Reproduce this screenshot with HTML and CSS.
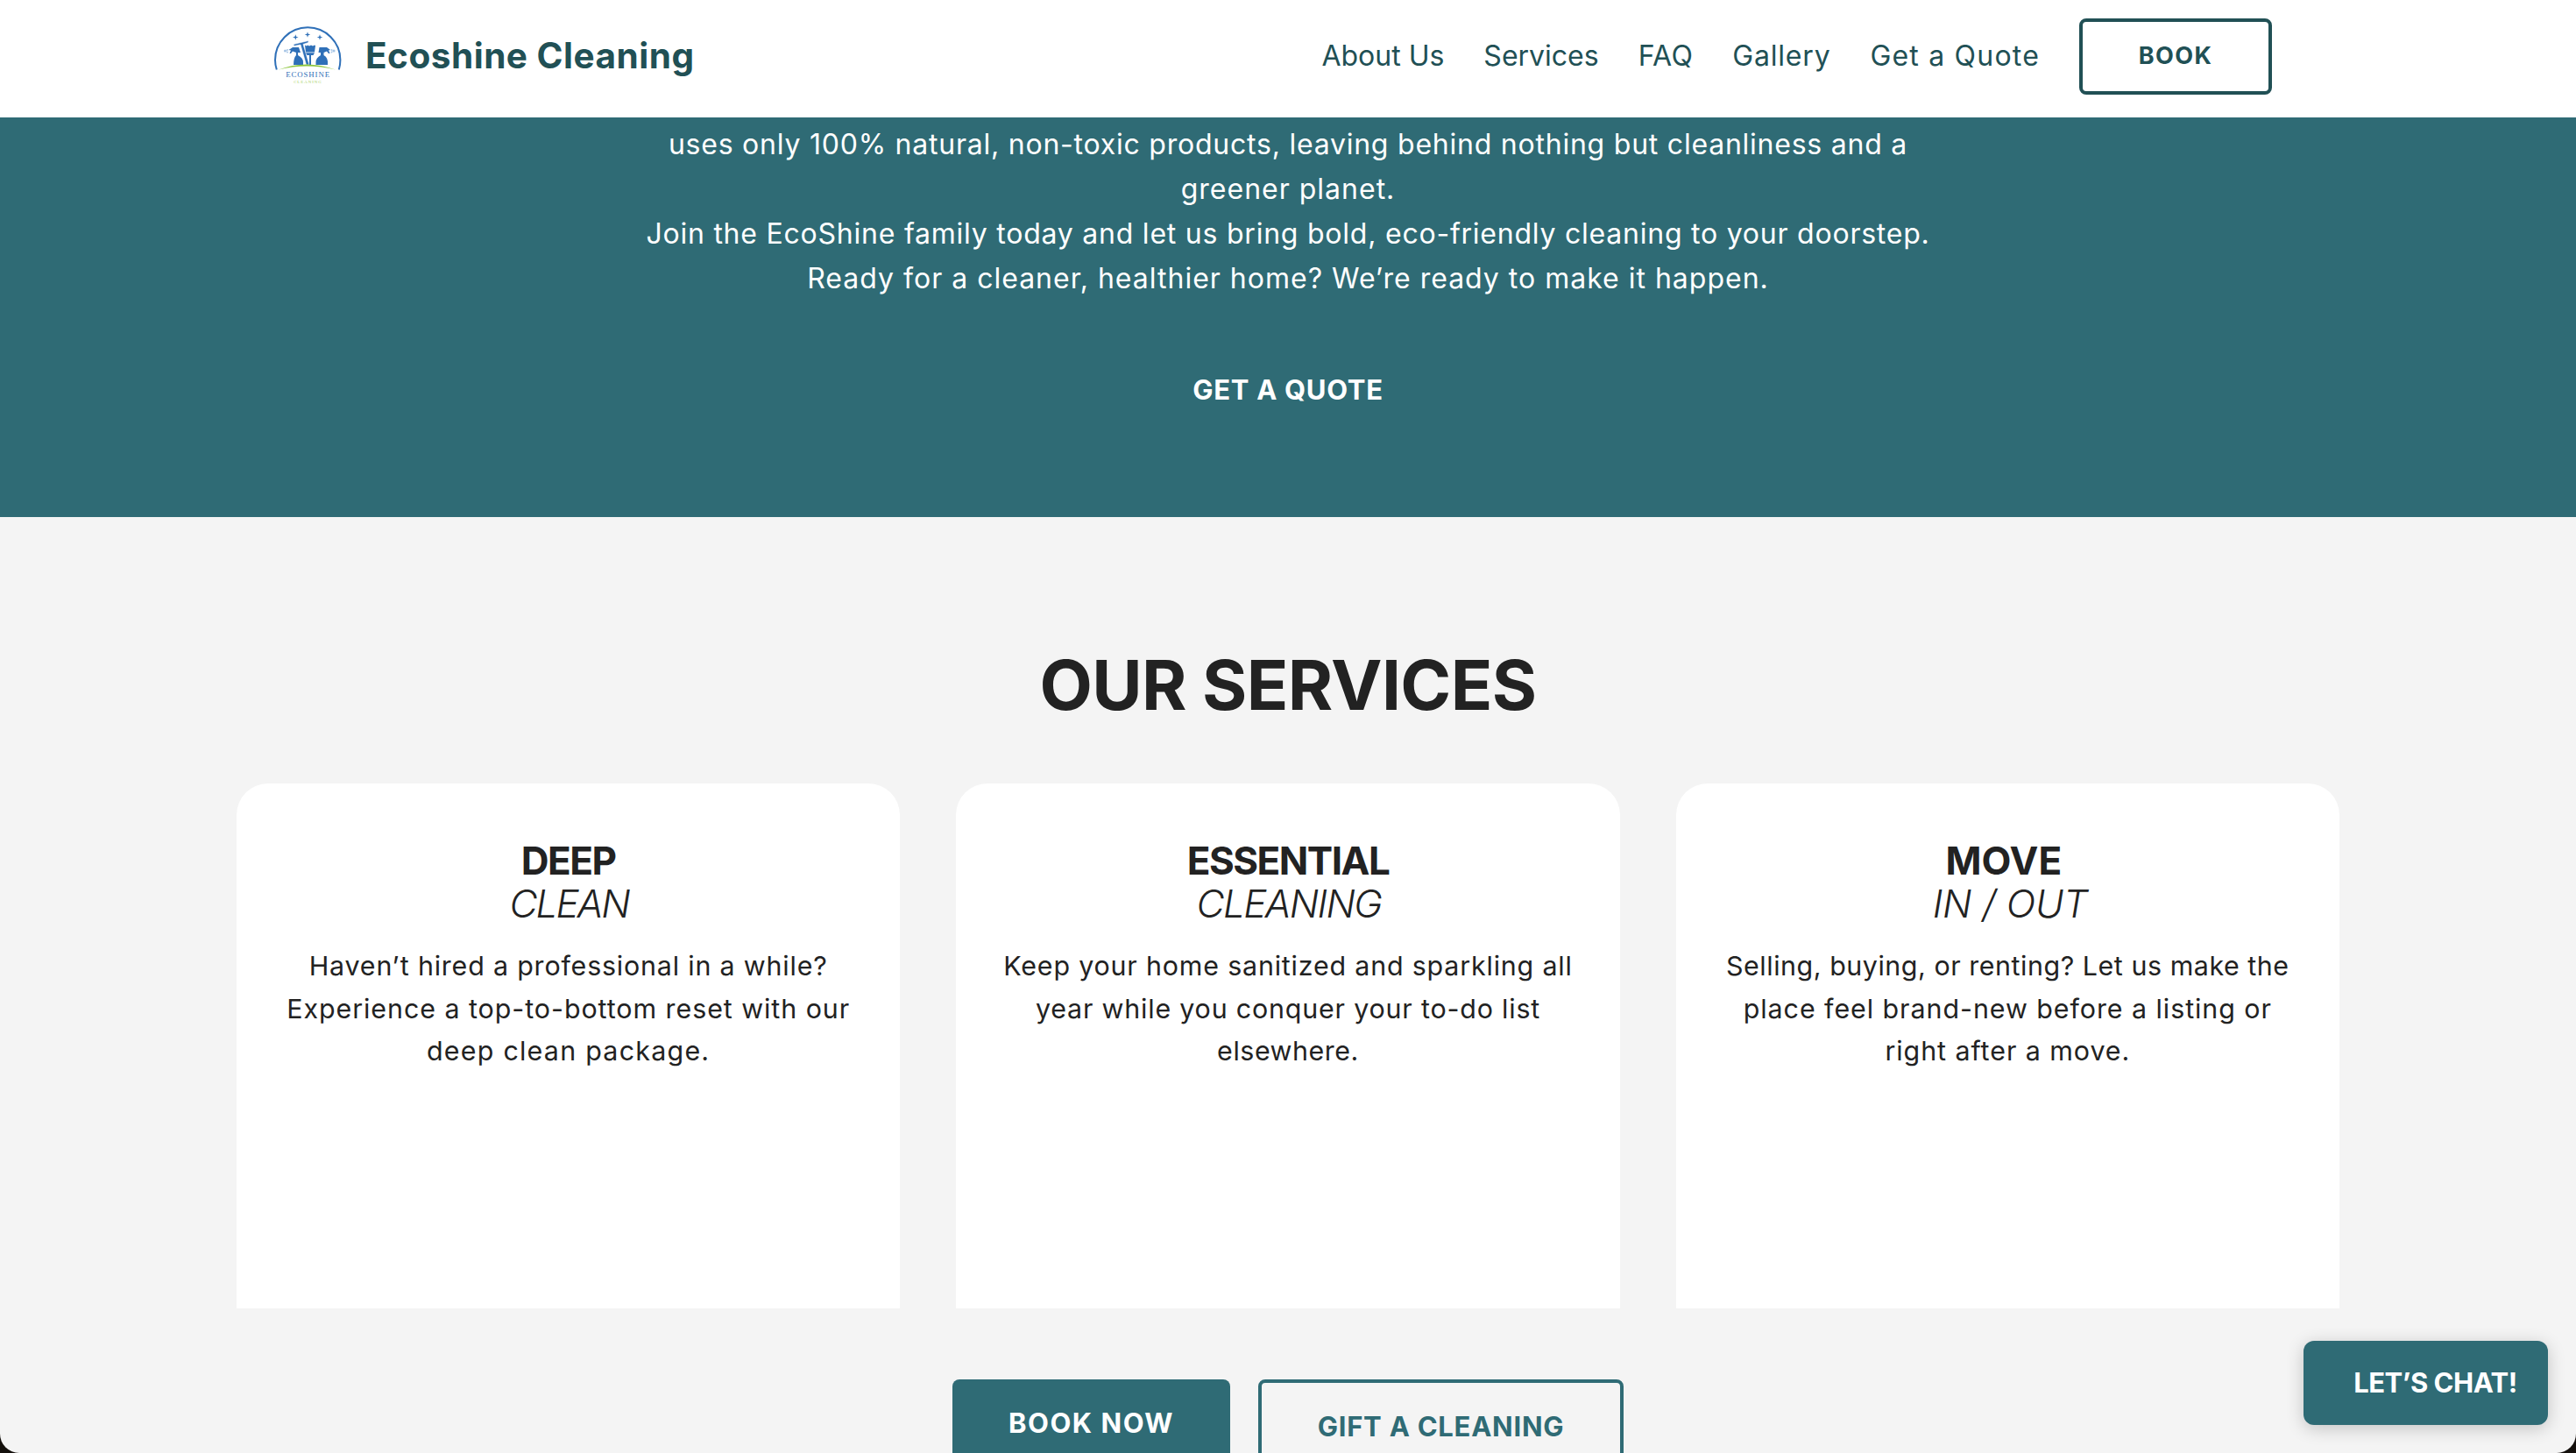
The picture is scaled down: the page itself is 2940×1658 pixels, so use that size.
FILE: index.html
```html
<!DOCTYPE html>
<html lang="en">
<head>
  <meta charset="UTF-8">
  <meta name="viewport" content="width=device-width, initial-scale=1.0">
  <title>Ecoshine Cleaning</title>
  <link rel="stylesheet" href="styles.css">
</head>
<body>
  <div class="page">
    <header class="header">
      <a class="brand">
        <svg class="logo" viewBox="0 0 100 84" role="img" aria-label="Ecoshine Cleaning logo">
          <!-- arch -->
          <path d="M15.8 59.5 Q14 54 14 48.5 A37.2 37.2 0 0 1 88.4 48.5 Q88.4 54 86.8 59.5" fill="none" stroke="#2f70b8" stroke-width="2"/>
          <!-- sparkles -->
          <g fill="#2f70b8">
            <path d="M51 16.2 L51.8 18.7 L54.3 19.5 L51.8 20.3 L51 22.8 L50.2 20.3 L47.7 19.5 L50.2 18.7Z"/>
            <path d="M37.3 19.2 L38.1 21.7 L40.6 22.5 L38.1 23.3 L37.3 25.8 L36.5 23.3 L34 22.5 L36.5 21.7Z"/>
            <path d="M65 19.2 L65.8 21.7 L68.3 22.5 L65.8 23.3 L65 25.8 L64.2 23.3 L61.7 22.5 L64.2 21.7Z"/>
          </g>
          <!-- spray bottles -->
          <g fill="#2f70b8">
            <path d="M29.5 37 L34 34 H41 L43 40 H40 V43 Q46 46 46 51 V54 H35 Q35 46 38 43 V40 L34 38.5 L32 41 H30.5 L32 37.5Z"/>
            <path d="M77 37 L73 34 H64.5 L63.5 40 H66 V43 Q60.5 46 60.5 51 V54 H74 Q75 46 69.5 43 V40 L73 38.5 L75 41 H76.5 L75 37.5Z"/>
          </g>
          <g fill="#a9c6e6">
            <circle cx="25.5" cy="38" r="1.6"/><circle cx="28" cy="39.5" r="1"/><circle cx="28" cy="37" r="1"/>
            <circle cx="81" cy="38" r="1.6"/><circle cx="78.5" cy="39.5" r="1"/><circle cx="78.5" cy="37" r="1"/>
          </g>
          <!-- squeegee -->
          <path d="M35 30.5 L52 26.5 V28.5 L46 30.5 L53 54 H49.5 L43 31 L35.5 32.5Z" fill="#2f70b8" stroke="#fff" stroke-width=".6"/>
          <!-- brush -->
          <path d="M48 31.5 L50 32.5 L51 31.5 L53 32.5 L55 31.5 L57 32.5 L59 31.5 L60 32 L59 39.5 H49Z" fill="#2f70b8"/>
          <path d="M49 40.3 H59 L57.5 43 H55 V54 H53 L53 43 H50.5Z" fill="#2f70b8"/>
          <path d="M18 59.5 Q49 47.5 83 59.5 Q50 51.5 18 59.5Z" fill="#8dc63f"/>
          <text x="51.6" y="68.2" class="logo-name">ECOSHINE</text>
          <text x="51.4" y="74.8" class="logo-sub">CLEANING</text>
        </svg>
        <span class="brand-name">Ecoshine Cleaning</span>
      </a>
      <nav class="nav">
        <a>About Us</a>
        <a>Services</a>
        <a class="nav-faq">FAQ</a>
        <a class="nav-gallery">Gallery</a>
        <a class="nav-quote">Get a Quote</a>
        <button class="btn-book">BOOK</button>
      </nav>
    </header>

    <section class="hero">
      <p class="hero-text">
        <span>uses only 100% natural, non-toxic products, leaving behind nothing but cleanliness and a</span>
        <span class="wide">greener planet.</span>
        <span>Join the EcoShine family today and let us bring bold, eco-friendly cleaning to your doorstep.</span>
        <span class="wide">Ready for a cleaner, healthier home? We’re ready to make it happen.</span>
      </p>
      <a class="hero-link">GET A QUOTE</a>
    </section>

    <section class="services">
      <h2>OUR SERVICES</h2>
      <div class="cards">
        <div class="card">
          <h3>DEEP</h3>
          <h4>CLEAN</h4>
          <p>
            <span>Haven’t hired a professional in a while?</span>
            <span class="wide">Experience a top-to-bottom reset with our</span>
            <span class="wider">deep clean package.</span>
          </p>
        </div>
        <div class="card card-essential">
          <h3>ESSENTIAL</h3>
          <h4>CLEANING</h4>
          <p>
            <span>Keep your home sanitized and sparkling all</span>
            <span>year while you conquer your to-do list</span>
            <span class="tight">elsewhere.</span>
          </p>
        </div>
        <div class="card card-move">
          <h3>MOVE</h3>
          <h4>IN / OUT</h4>
          <p>
            <span class="tight">Selling, buying, or renting? Let us make the</span>
            <span class="wide">place feel brand-new before a listing or</span>
            <span class="wide">right after a move.</span>
          </p>
        </div>
      </div>
      <div class="actions">
        <button class="btn btn-primary">BOOK NOW</button>
        <button class="btn btn-outline">GIFT A CLEANING</button>
      </div>
    </section>
    <button class="chat">LET’S CHAT!</button>
  </div>
</body>
</html>
```
FILE: styles.css
```css
* {
  box-sizing: border-box;
  margin: 0;
  padding: 0;
}
body {
  background: #14100c;
  font-family: Inter, "Open Sans", sans-serif;
  color: #222;
}
button {
  font-family: inherit;
}
.page {
  position: relative;
  height: 1658px;
  overflow: hidden;
  background: #f4f4f4;
  border-radius: 0 0 22px 22px;
}

/* header */
.header {
  display: flex;
  justify-content: space-between;
  align-items: flex-start;
  height: 134px;
  padding: 21px 347px 0 300px;
  background: #fff;
  color: #215055;
}
.brand {
  display: flex;
  align-items: center;
  height: 85px;
}
.logo {
  width: 100px;
  height: 84px;
  margin: 0 17px 3px 0;
}
.logo-name {
  font: 8.8px "Liberation Serif", serif;
  letter-spacing: 0.9px;
  text-anchor: middle;
  fill: #2f70b8;
}
.logo-sub {
  font: 4.8px "Liberation Serif", serif;
  letter-spacing: 1px;
  text-anchor: middle;
  fill: #a6d15f;
}
.brand-name {
  font-size: 40.5px;
  font-weight: 650;
  letter-spacing: 0.5px;
}
.nav {
  display: flex;
  align-items: center;
  gap: 45px;
  height: 87px;
  font-size: 32px;
}
.nav a {
  position: relative;
  top: -1px;
}
.nav-faq {
  letter-spacing: 0.4px;
}
.nav-gallery {
  letter-spacing: 0.8px;
}
.nav-quote {
  letter-spacing: 1.2px;
}
.btn-book {
  width: 220px;
  height: 87px;
  padding-bottom: 2px;
  border: 4px solid #215055;
  border-radius: 8px;
  background: #fff;
  color: #215055;
  font-size: 27px;
  font-weight: 700;
  letter-spacing: 1.4px;
}

/* hero */
.hero {
  height: 456px;
  padding-top: 5px;
  background: #2f6b75;
  color: #fff;
  text-align: center;
}
.hero-text {
  font-size: 32px;
  line-height: 51px;
  letter-spacing: 0.77px;
}
.hero-text span,
.card p span {
  display: block;
  white-space: nowrap;
}
.hero-text .wide {
  letter-spacing: 1px;
}
.hero-link {
  display: block;
  margin-top: 77px;
  font-size: 31px;
  font-weight: 700;
  line-height: 50px;
  letter-spacing: 0.7px;
}

/* services */
.services {
  padding: 144px 270px 0;
  text-align: center;
}
h2 {
  margin-bottom: 64px;
  font-size: 78.4px;
  font-weight: 750;
  line-height: 96px;
  letter-spacing: -0.6px;
}
.cards {
  display: grid;
  grid-template-columns: repeat(3, 1fr);
  gap: 64px;
}
.card {
  height: 599px;
  padding-top: 64px;
  border-radius: 36px 36px 0 0;
  background: #fff;
}
.card h3,
.card h4 {
  font-size: 44px;
  line-height: 49px;
}
.card h3 {
  font-weight: 700;
  letter-spacing: -1.5px;
}
.card h4 {
  font-weight: 300;
  font-style: italic;
  padding-left: 2px;
  letter-spacing: -2px;
}
.card-essential h4 {
  letter-spacing: -1.6px;
}
.card-move h3 {
  padding-right: 9px;
  letter-spacing: 0;
}
.card-move h4 {
  padding-left: 6px;
  letter-spacing: -0.2px;
}
.card p {
  margin-top: 22px;
  font-size: 30.4px;
  line-height: 48.6px;
  letter-spacing: 0.82px;
}
.card p .wide {
  letter-spacing: 0.95px;
}
.card p .wider {
  letter-spacing: 1.25px;
}
.card p .tight {
  letter-spacing: 0.55px;
}
.actions {
  display: flex;
  justify-content: center;
  gap: 32px;
  margin-top: 81px;
}
.btn {
  padding-bottom: 2px;
  border-radius: 8px;
  font-size: 31px;
  font-weight: 650;
}
.btn-primary {
  width: 317px;
  height: 100px;
  border: none;
  background: #2f6b75;
  color: #fff;
  letter-spacing: 1.5px;
}
.btn-outline {
  width: 417px;
  height: 108px;
  border: 4px solid #2f6b75;
  background: transparent;
  color: #2f6b75;
  letter-spacing: 0.75px;
}

/* floating chat button */
.chat {
  position: absolute;
  right: 32px;
  bottom: 32px;
  width: 279px;
  height: 96px;
  padding: 0 0 2px 22px;
  border: none;
  border-radius: 12px;
  background: #2f6b75;
  box-shadow: 0 4px 20px rgba(0, 0, 0, 0.2);
  color: #fff;
  font-size: 31px;
  font-weight: 700;
  letter-spacing: -0.5px;
}
```
